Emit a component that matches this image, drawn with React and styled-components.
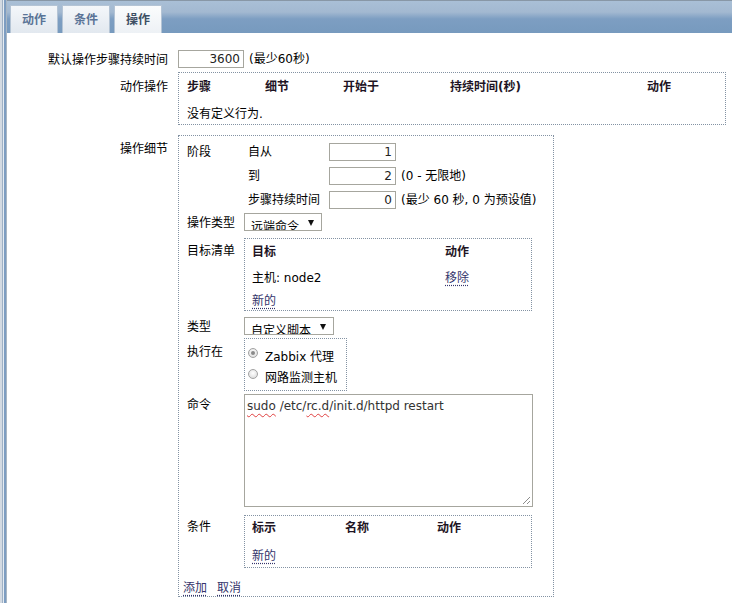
import React from 'react'
import styled, { createGlobalStyle } from 'styled-components'

const GlobalStyle = createGlobalStyle`
  html, body {
    margin: 0;
    padding: 0;
    background: #fff;
  }
  body {
    font-family: "DejaVu Sans", "Noto Sans CJK SC", sans-serif;
    font-size: 12px;
    line-height: 16px;
    color: #000;
  }
`

const linkColor = '#34346b'
const dotColor = '#8392a3'
const inputBorder = '#a6a69e'

const Page = styled.div`
  display: flex;
  width: 732px;
  min-height: 603px;
`

const Stripe = styled.div`
  width: 7px;
  flex-shrink: 0;
  background: linear-gradient(
    to right,
    #d3dae2 0, #d3dae2 2px,
    #9fb1c5 2px, #9fb1c5 3px,
    #e6ecf2 3px, #e6ecf2 4px,
    #7d9dc1 4px, #7d9dc1 6px,
    #a8b6c4 6px
  );
`

const Main = styled.div`
  flex: 1;
  min-width: 0;
`

const TabBar = styled.div`
  height: 32px;
  border-top: 1px solid #8897a6;
  background: linear-gradient(#a9bfd6 0, #a3b9d1 11px, #7d9ec2 18px, #779abe 100%);
  display: flex;
  align-items: flex-end;
  gap: 4px;
  padding-left: 3px;
`

const Tab = styled.div`
  box-sizing: border-box;
  height: 28px;
  padding: 6px 11px 0;
  border: 1px solid #b4c4d5;
  border-bottom: none;
  background: ${(p) => (p.$active ? 'linear-gradient(#fbfcfd, #edf1f5)' : 'linear-gradient(#f4f7fa, #e2e8ef)')};
  color: ${(p) => (p.$active ? '#3e4f64' : '#5a7497')};
  font-weight: bold;
`

const Form = styled.div`
  padding: 17px 6px 0 0;
`

const FormRow = styled.div`
  display: grid;
  grid-template-columns: 161px 1fr;
  column-gap: 10px;
  margin-top: ${(p) => p.$mt || 0}px;
`

const RowLabel = styled.div`
  text-align: right;
  white-space: nowrap;
  padding-top: ${(p) => p.$pt || 0}px;
`

const Inline = styled.div`
  display: flex;
  align-items: center;
`

const NumInput = styled.input`
  box-sizing: border-box;
  width: ${(p) => p.$w}px;
  height: 18px;
  margin: 0;
  padding: 0 3px;
  border: 1px solid ${inputBorder};
  background: #fff;
  font: inherit;
  color: #222;
  text-align: right;
  outline: none;
`

const Note = styled.span`
  margin-left: 5px;
  white-space: nowrap;
`

const DottedBox = styled.div`
  box-sizing: border-box;
  border: 1px dotted ${dotColor};
  width: ${(p) => (p.$w ? `${p.$w}px` : 'auto')};
  padding: ${(p) => p.$pad};
`

const Table = styled.div`
  display: grid;
  grid-template-columns: ${(p) => p.$cols};
`

const Head = styled.div`
  font-weight: bold;
  color: #1e1424;
  white-space: nowrap;
`

const FullRow = styled.div`
  grid-column: 1 / -1;
  margin-top: ${(p) => p.$mt || 0}px;
`

const Cell = styled.div`
  margin-top: ${(p) => p.$mt || 0}px;
`

const Link = styled.a`
  color: ${linkColor};
  text-decoration: underline dotted;
  text-underline-offset: 3px;
  cursor: pointer;
`

const DetailRow = styled.div`
  display: grid;
  grid-template-columns: 57px 1fr;
  margin-top: ${(p) => p.$mt || 0}px;
`

const DetailLabel = styled.div`
  white-space: nowrap;
  padding-top: ${(p) => p.$pt || 0}px;
`

const PhaseGrid = styled.div`
  display: grid;
  grid-template-columns: 81px auto 1fr;
  row-gap: 6px;
  align-items: center;
  padding-left: 4px;
`

const Select = styled.div`
  box-sizing: border-box;
  width: ${(p) => p.$w}px;
  height: 18px;
  border: 1px solid ${inputBorder};
  background: #fff;
  display: flex;
  justify-content: space-between;
  align-items: flex-start;
  padding: 5px 7px 0 6px;
  overflow: hidden;
  white-space: nowrap;
`

const Arrow = styled.span`
  width: 0;
  height: 0;
  border-left: 3px solid transparent;
  border-right: 3px solid transparent;
  border-top: 6px solid #111;
  margin-top: 1px;
`

const RadioRow = styled.label`
  display: flex;
  align-items: flex-start;
  gap: 7px;
  height: 16px;
  & + & {
    margin-top: 5px;
  }
`

const Radio = styled.span`
  box-sizing: border-box;
  width: 10px;
  height: 10px;
  margin-top: -1px;
  border-radius: 50%;
  border: 1px solid #a2a2a2;
  background: radial-gradient(circle at 50% 40%, #ffffff 0, #e6e6e6 60%, #d2d2d2 100%);
  display: flex;
  align-items: center;
  justify-content: center;
  &::after {
    content: '';
    width: 4px;
    height: 4px;
    border-radius: 50%;
    background: ${(p) => (p.$checked ? '#8a8a8a' : 'transparent')};
  }
`

const CommandArea = styled.div`
  position: relative;
  box-sizing: border-box;
  width: 289px;
  height: 113px;
  border: 1px solid ${inputBorder};
  padding: 3px 2px;
  color: #333;
  white-space: nowrap;
`

const Misspelled = styled.span`
  text-decoration: underline wavy #e04040;
  text-decoration-thickness: 1px;
  text-underline-offset: 3px;
`

const Grip = styled.svg`
  position: absolute;
  right: 1px;
  bottom: 1px;
`

const Buttons = styled.div`
  display: flex;
  gap: 10px;
  margin: 12px 0 0 -4px;
`

const App = () => {
  return (
    <>
      <GlobalStyle />
      <Page>
        <Stripe />
        <Main>
          <TabBar>
            <Tab>动作</Tab>
            <Tab>条件</Tab>
            <Tab $active>操作</Tab>
          </TabBar>

          <Form>
            <FormRow>
              <RowLabel $pt={2}>默认操作步骤持续时间</RowLabel>
              <Inline>
                <NumInput $w={66} defaultValue="3600" />
                <Note>(最少60秒)</Note>
              </Inline>
            </FormRow>

            <FormRow $mt={4}>
              <RowLabel $pt={7}>动作操作</RowLabel>
              <DottedBox $pad="6px 8px 2px">
                <Table $cols="78px 78px 107px 197px 1fr">
                  <Head>步骤</Head>
                  <Head>细节</Head>
                  <Head>开始于</Head>
                  <Head>持续时间(秒)</Head>
                  <Head>动作</Head>
                  <FullRow $mt={11}>没有定义行为.</FullRow>
                </Table>
              </DottedBox>
            </FormRow>

            <FormRow $mt={10}>
              <RowLabel $pt={6}>操作细节</RowLabel>
              <DottedBox $w={376} $pad="7px 8px 0 8px">
                <DetailRow>
                  <DetailLabel $pt={1}>阶段</DetailLabel>
                  <PhaseGrid>
                    <span>自从</span>
                    <NumInput $w={67} defaultValue="1" />
                    <span />
                    <span>到</span>
                    <NumInput $w={67} defaultValue="2" />
                    <Note>(0 - 无限地)</Note>
                    <span>步骤持续时间</span>
                    <NumInput $w={67} defaultValue="0" />
                    <Note>(最少 60 秒, 0 为预设值)</Note>
                  </PhaseGrid>
                </DetailRow>

                <DetailRow $mt={4}>
                  <DetailLabel $pt={2}>操作类型</DetailLabel>
                  <Select $w={78}>
                    <span>远端命令</span>
                    <Arrow />
                  </Select>
                </DetailRow>

                <DetailRow $mt={7}>
                  <DetailLabel $pt={5}>目标清单</DetailLabel>
                  <DottedBox $w={288} $pad="5px 8px 1px 7px">
                    <Table $cols="193px 1fr">
                      <Head>目标</Head>
                      <Head>动作</Head>
                      <Cell $mt={10}>主机: node2</Cell>
                      <Cell $mt={10}>
                        <Link>移除</Link>
                      </Cell>
                      <FullRow $mt={7}>
                        <Link>新的</Link>
                      </FullRow>
                    </Table>
                  </DottedBox>
                </DetailRow>

                <DetailRow $mt={6}>
                  <DetailLabel $pt={2}>类型</DetailLabel>
                  <Select $w={90}>
                    <span>自定义脚本</span>
                    <Arrow />
                  </Select>
                </DetailRow>

                <DetailRow $mt={3}>
                  <DetailLabel $pt={6}>执行在</DetailLabel>
                  <DottedBox $w={103} $pad="10px 4px 4px 3px">
                    <RadioRow>
                      <Radio $checked />
                      <span>Zabbix 代理</span>
                    </RadioRow>
                    <RadioRow>
                      <Radio />
                      <span>网路监测主机</span>
                    </RadioRow>
                  </DottedBox>
                </DetailRow>

                <DetailRow $mt={3}>
                  <DetailLabel $pt={3}>命令</DetailLabel>
                  <CommandArea>
                    <Misspelled>sudo</Misspelled> /etc/<Misspelled>rc.d</Misspelled>/init.d/httpd restart
                    <Grip width="9" height="9" viewBox="0 0 9 9">
                      <line x1="8" y1="1" x2="1" y2="8" stroke="#8c8c8c" strokeWidth="1" />
                      <line x1="8" y1="5" x2="5" y2="8" stroke="#8c8c8c" strokeWidth="1" />
                    </Grip>
                  </CommandArea>
                </DetailRow>

                <DetailRow $mt={8}>
                  <DetailLabel $pt={4}>条件</DetailLabel>
                  <DottedBox $w={288} $pad="4px 8px 3px 7px">
                    <Table $cols="93px 92px 1fr">
                      <Head>标示</Head>
                      <Head>名称</Head>
                      <Head>动作</Head>
                      <FullRow $mt={12}>
                        <Link>新的</Link>
                      </FullRow>
                    </Table>
                  </DottedBox>
                </DetailRow>

                <Buttons>
                  <Link>添加</Link>
                  <Link>取消</Link>
                </Buttons>
              </DottedBox>
            </FormRow>
          </Form>
        </Main>
      </Page>
    </>
  )
}

export default App
